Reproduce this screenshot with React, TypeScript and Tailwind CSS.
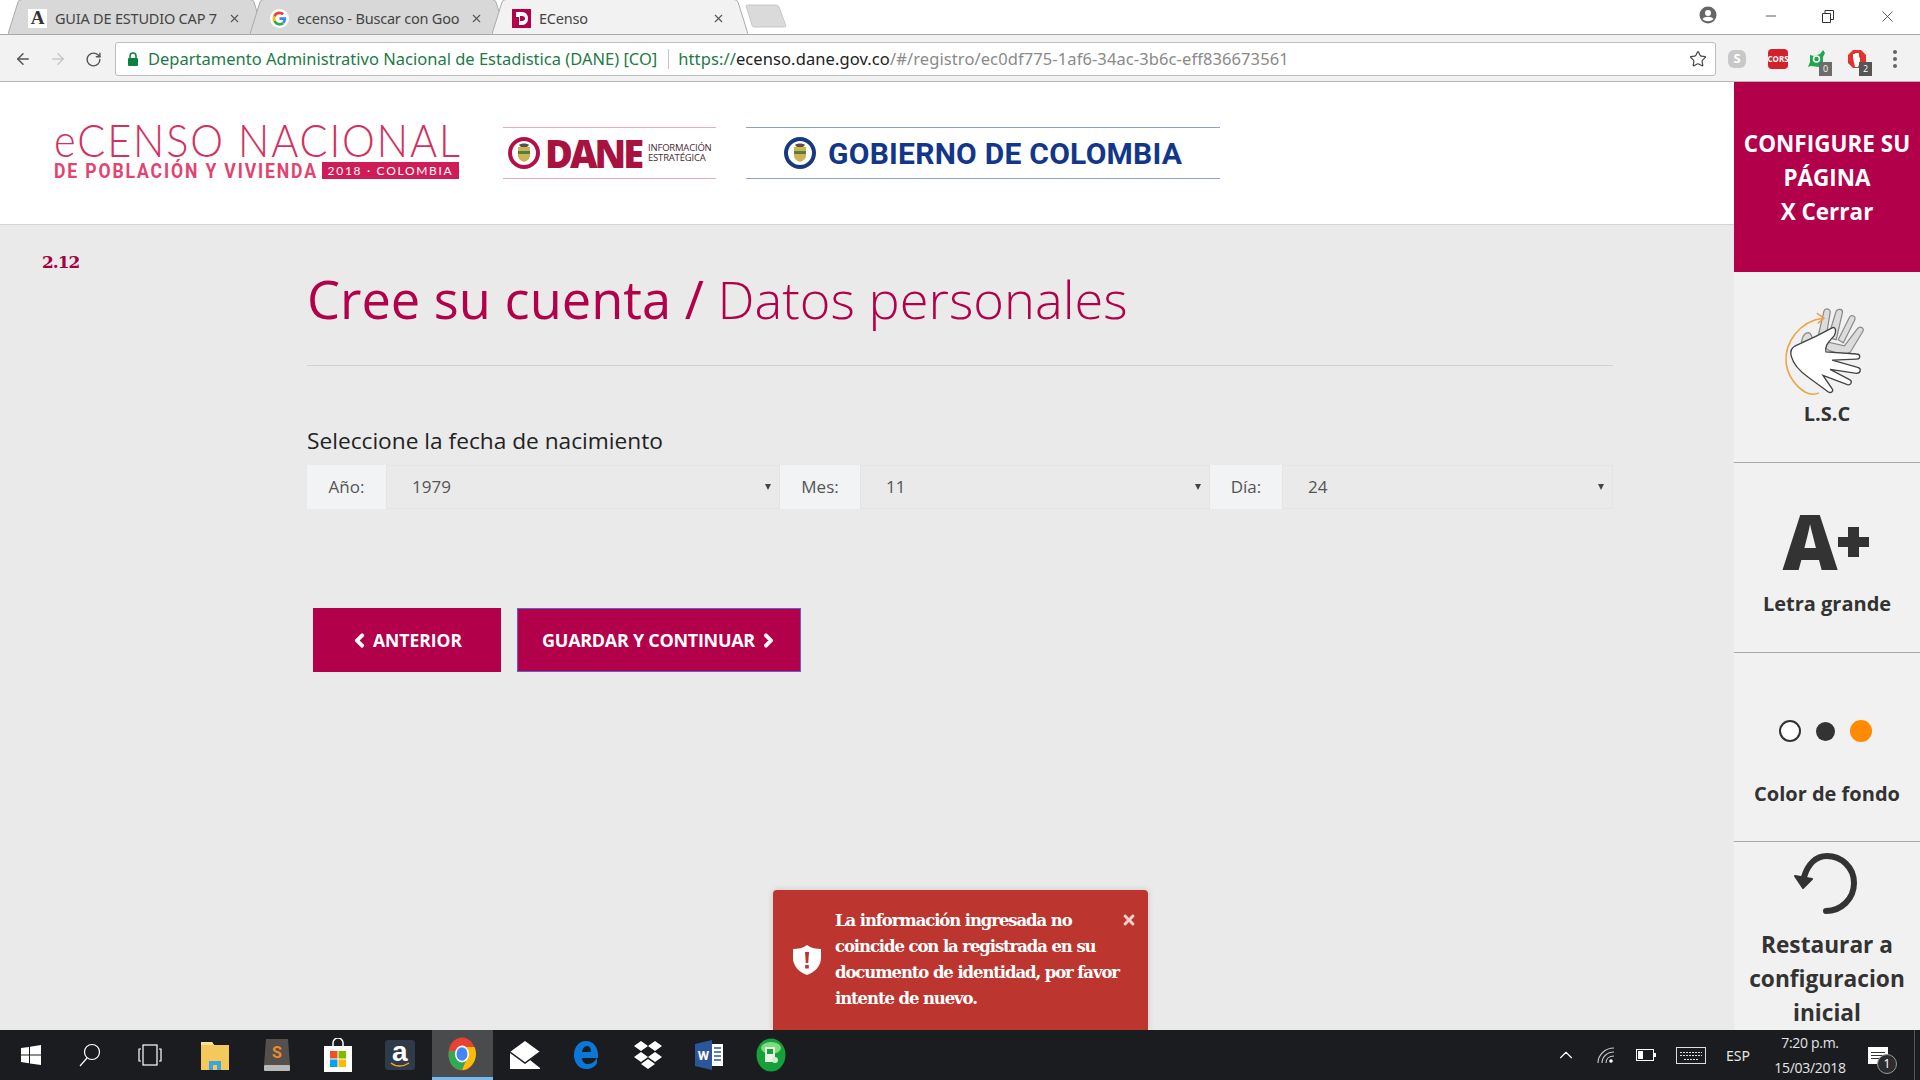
import React from "react";
import { FaChevronLeft, FaChevronRight, FaTimes } from "react-icons/fa";
import { ArrowLeft, ArrowRight, RotateCw, Star, X, Minus, ChevronUp } from "lucide-react";

const Crest = ({ size, ring }: { size: number; ring: string }) => (
  <svg width={size} height={size} viewBox="0 0 32 32" className="shrink-0">
    <circle cx="16" cy="16" r="14" fill="#fff" stroke={ring} strokeWidth="4" />
    <path d="M10 10h12v8c0 4-3 6-6 7-3-1-6-3-6-7z" fill="#c9b458" />
    <path d="M10 14h12v3H10z" fill="#5d7a3a" />
    <path d="M11 8c2-2 8-2 10 0l-2 2h-6z" fill="#55504a" />
  </svg>
);

const Tab = ({
  icon,
  title,
  active,
  first,
}: {
  icon: React.ReactNode;
  title: string;
  active?: boolean;
  first?: boolean;
}) => (
  <div className={`relative h-[35px] w-[256px] shrink-0 ${first ? "" : "-ml-[14px]"} ${active ? "z-10" : ""}`}>
    <svg className="absolute inset-0" width="256" height="35" viewBox="0 0 256 35">
      <path
        d="M0 35 L10 3 Q11 .5 14 .5 H242 Q245 .5 246 3 L256 35"
        fill={active ? "#f2f2f2" : "#d8d8d8"}
        stroke="#a9a9a9"
      />
    </svg>
    <div className="relative flex h-full items-center pl-[20px] pr-[23px] pt-[4px]">
      <div className="w-[19px] h-[19px] shrink-0">{icon}</div>
      <span className="ml-[8px] w-[163px] overflow-hidden whitespace-nowrap text-[14.5px] text-[#444] font-['Noto_Sans',sans-serif] tracking-[-0.2px]">
        {title}
      </span>
      <X size={13} strokeWidth={2} className="ml-auto text-[#555]" />
    </div>
  </div>
);

const SideItem = ({ h, label, icon }: { h: string; label: React.ReactNode; icon: React.ReactNode }) => (
  <div className={`${h} shrink-0 border-b border-[#a8a8a8] flex flex-col items-center`}>{icon}{label}</div>
);

const HandIcon = () => (
  <svg width="88" height="94" viewBox="0 0 86 92" className="mt-[35px]">
    <g fill="#dcdcdc" stroke="#8a8a8a" strokeWidth="1.2">
      <path d="M18 34c1-6 4-9 7-9 3 1 4 5 5 10z" />
      <path d="M34 30l6-26c1-3 7-3 6 2l-4 24z" />
      <path d="M44 30l8-26c2-3 7-2 6 2l-6 26z" />
      <path d="M54 32l11-22c2-3 7-1 5 3l-11 22z" />
      <path d="M60 38l13-17c3-3 7 0 5 3L66 44c-4 3-12 2-20-1-5-2-7-6-4-9z" />
    </g>
    <path
      d="M35 84C22 90 5 72 3 55 1 35 16 14 39 11"
      fill="none"
      stroke="#f0a040"
      strokeWidth="1.5"
    />
    <path d="M33 6l7 5-6 5" fill="none" stroke="#f0a040" strokeWidth="1.5" />
    <path
      d="M49 20C40 25 26 32 12 38c-4 2-5 6-4 10 2 8 10 16 17 21l19 14c3 2 6-1 4-3l-9-13 24 9c4 1 5-4 2-5L46 61l26 4c4 0 5-5 1-6L48 52l24-1c4 0 4-5 0-5L42 44c-2-6 4-11 8-16 2-3 2-8-1-8z"
      fill="#fff"
      stroke="#444"
      strokeWidth="1.3"
    />
  </svg>
);

const TaskSlot = ({ children, active, className = "" }: { children: React.ReactNode; active?: boolean; className?: string }) => (
  <div
    className={`h-full w-[61.5px] shrink-0 flex items-center justify-center ${className} ${
      active ? "bg-[#4a4b4d] border-b-[3px] border-[#76b9ed]" : ""
    }`}
  >
    {children}
  </div>
);

const InputLabel = ({ w, children }: { w: string; children: React.ReactNode }) => (
  <div className={`${w} shrink-0 bg-[#f1f3f4] flex items-center justify-center text-[17px] text-[#555]`}>{children}</div>
);

const SelectBox = ({ w, value }: { w: string; value: string }) => (
  <div className={`${w} shrink-0 border border-[#e4e4e4] flex items-center justify-between pl-[25px] pr-[8px] text-[17px] text-[#555]`}>
    <span>{value}</span>
    <span className="w-0 h-0 border-x-[3.5px] border-x-transparent border-t-[6px] border-t-[#444]" />
  </div>
);

export default function App() {
  return (
    <div className="h-screen w-full overflow-hidden flex flex-col relative bg-[#eaeaea] font-['Open_Sans',sans-serif]">
      {/* Tab strip */}
      <div className="h-[35px] shrink-0 bg-white border-b border-[#a9a9a9] flex items-end pl-[8px] relative">
        <Tab
          first
          title="GUIA DE ESTUDIO CAP 7"
          icon={
            <div className="w-full h-full bg-white flex items-center justify-center font-['Liberation_Serif',serif] font-bold text-[19px] text-[#333]">
              A
            </div>
          }
        />
        <Tab
          title="ecenso - Buscar con Goo"
          icon={
            <svg viewBox="0 0 48 48" className="w-full h-full">
              <circle cx="24" cy="24" r="24" fill="#fff" />
              <path d="M41 24.5c0-1.3-.1-2.300-.3-3.500H24v6.500h9.600c-.4 2.200-1.700 4-3.500 5.300l5.400 4.200C38.800 33.900 41 29.600 41 24.500z" fill="#4285f4" />
              <path d="M24 42c4.600 0 8.400-1.500 11.500-4.100l-5.400-4.200c-1.500 1-3.500 1.700-6.100 1.700-4.600 0-8.600-3.100-10-7.300l-5.600 4.300C11.300 38.100 17.200 42 24 42z" fill="#34a853" />
              <path d="M14 28.100c-.8-2.400-.8-5.200 0-7.900l-5.600-4.300c-2.500 5-2.500 11.200 0 16.500z" fill="#fbbc05" />
              <path d="M24 13c2.600 0 4.900.9 6.800 2.600l4.800-4.800C32.400 7.900 28.600 6 24 6 17.200 6 11.300 9.900 8.400 15.900l5.600 4.300c1.400-4.200 5.400-7.200 10-7.200z" fill="#ea4335" />
            </svg>
          }
        />
        <Tab
          active
          title="ECenso"
          icon={
            <svg viewBox="0 0 19 19" className="w-full h-full">
              <rect width="19" height="19" fill="#b3004a" />
              <path d="M4 3h6c4 0 6 3 6 6.500S14 16 10 16H4z" fill="#fff" />
              <path d="M8 7h2c2 0 3 1 3 2.500S12 12 10 12H8z" fill="#b3004a" />
              <path d="M4 8h3v8H4z" fill="#b3004a" />
            </svg>
          }
        />
        <svg width="42" height="24" viewBox="0 0 42 24" className="-ml-[3px] mb-[6px] shrink-0">
          <path d="M1 2 Q1 1 3 1 H31 Q33 1 34 3 L41 22 Q41 23 39 23 H9 Q7 23 7 21z" fill="#dadada" stroke="#c8c8c8" />
        </svg>
        <div className="ml-auto self-start flex items-center h-[32px] text-[#333]">
          <svg width="20" height="20" viewBox="0 0 20 20" className="mr-[45px] mb-[2px]">
            <circle cx="10" cy="10" r="8.500" fill="#666" />
            <circle cx="10" cy="8" r="3" fill="#fff" />
            <path d="M4.500 14c2-3 9-3 11 0-3 3-8 3-11 0z" fill="#fff" />
          </svg>
          <Minus size={16} strokeWidth={1.2} className="mr-[43px]" />
          <svg width="12" height="13" viewBox="0 0 12 13" className="mr-[44px]" fill="none" stroke="#333">
            <path d="M.5 3.500h8v9h-8zM3 3.500v-3h8.500v9h-3" />
          </svg>
          <X size={19} strokeWidth={1} className="mr-[23px]" />
        </div>
      </div>

      {/* Toolbar */}
      <div className="h-[47px] shrink-0 bg-[#f2f2f2] border-b border-[#b5b5b5] flex items-center pl-[14px] pt-[2px]">
        <ArrowLeft size={18} strokeWidth={2} className="text-[#555]" />
        <ArrowRight size={18} strokeWidth={2} className="ml-[17px] text-[#c8c8c8]" />
        <RotateCw size={17} strokeWidth={2} className="ml-[18px] text-[#555]" />
        <div className="ml-[13px] w-[1601px] h-[34px] bg-white border border-[#bdbdbd] rounded-[3px] flex items-center pl-[11px] pr-[8px] font-['Noto_Sans',sans-serif] text-[16.5px]">
          <svg width="12" height="15" viewBox="0 0 12 15" className="shrink-0">
            <path d="M3 6V4a3 3 0 016 0v2" fill="none" stroke="#0b8043" strokeWidth="1.500" />
            <rect x="1" y="6" width="10" height="8" rx="1" fill="#0b8043" />
          </svg>
          <span className="ml-[9px] text-[#1e7a46] whitespace-nowrap">
            Departamento Administrativo Nacional de Estadistica (DANE) [CO]
          </span>
          <span className="w-px h-[20px] bg-[#c4c4c4] ml-[11px] shrink-0" />
          <span className="ml-[9px] whitespace-nowrap text-[#8a8a8a] tracking-[0.1px]">
            <span className="text-[#1e7a46]">https://</span>
            <span className="text-[#222]">ecenso.dane.gov.co</span>/#/registro/ec0df775-1af6-34ac-3b6c-eff836673561
          </span>
          <Star size={18} strokeWidth={1.6} className="ml-auto text-[#444]" />
        </div>
        {/* extensions */}
        <div className="flex items-center ml-[12px]">
          <div className="w-[18px] h-[18px] rounded-[6px] bg-[#c8c8c8] flex items-center justify-center text-white text-[13px] font-bold">S</div>
          <div className="ml-[22px] w-[20px] h-[20px] rounded-[4px] bg-[#d3202a] flex items-center justify-center text-white text-[8px] font-bold">CORS</div>
          <div className="ml-[19px] relative w-[20px] h-[20px]">
            <svg viewBox="0 0 20 20" className="w-full h-full">
              <path d="M3 6l4 1 6-2 3-4 2 3-2 4v6l-4 4-8-1-3 1 2-5z" fill="#1ca84e" />
              <circle cx="9.500" cy="10" r="3" fill="none" stroke="#fff" strokeWidth="1.500" />
            </svg>
            <span className="absolute -right-[5px] -bottom-[7px] w-[13px] h-[14px] bg-[#6c6c6c] text-white text-[9px] flex items-center justify-center">0</span>
          </div>
          <div className="ml-[20px] relative w-[20px] h-[20px]">
            <svg viewBox="0 0 20 20" className="w-full h-full">
              <path d="M6 1h8l5 5v8l-5 5H6l-5-5V6z" fill="#e5322e" />
              <path d="M6 9V5h2v3-4h2v4-4h2v5l1-1v5l-2 5H8z" fill="#fff" />
            </svg>
            <span className="absolute -right-[5px] -bottom-[7px] w-[13px] h-[14px] bg-[#555] text-white text-[9px] flex items-center justify-center">2</span>
          </div>
          <div className="ml-[26px] flex flex-col gap-[3px]">
            <span className="w-[4px] h-[4px] rounded-full bg-[#666]" />
            <span className="w-[4px] h-[4px] rounded-full bg-[#666]" />
            <span className="w-[4px] h-[4px] rounded-full bg-[#666]" />
          </div>
        </div>
      </div>

      {/* Page */}
      <div className="flex-1 min-h-0 flex">
        <div className="flex-1 min-w-0 flex flex-col">
          {/* Header */}
          <div className="h-[143px] shrink-0 bg-white border-b border-[#d4d4d4] flex items-center pl-[54px]">
            <div className="w-[405px] shrink-0 -mt-[8px]">
              <div className="text-[46px] leading-[43px] font-light text-[#d3305e] tracking-[2.1px] whitespace-nowrap font-['Lato',sans-serif] scale-x-[0.9] origin-left">
                eCENSO NACIONAL
              </div>
              <div className="flex items-center h-[20px]">
                <span className="text-[20px] font-bold text-[#e2436f] tracking-[2.1px] whitespace-nowrap font-['Roboto',sans-serif] scale-x-[0.88] origin-left w-[268px]">
                  DE POBLACIÓN Y VIVIENDA
                </span>
                <span className="w-[137px] h-[17px] bg-[#cf1c56] text-white text-[12px] tracking-[1.7px] flex items-center justify-center whitespace-nowrap font-['Lato',sans-serif]">
                  2018 · COLOMBIA
                </span>
              </div>
            </div>
            <div className="ml-[44px] w-[213px] h-[52px] shrink-0 border-y border-[#f2a6c0] flex items-center pl-[5px]">
              <Crest size={32} ring="#b3104a" />
              <span className="ml-[5px] text-[38px] leading-none font-extrabold text-[#a8123f] tracking-[-3px] font-['Open_Sans',sans-serif]">DANE</span>
              <div className="ml-[7px] text-[9.5px] leading-[10px] text-[#4a2a33] tracking-[-0.2px]">
                <div>INFORMACIÓN</div>
                <div>ESTRATÉGICA</div>
              </div>
            </div>
            <div className="ml-[30px] w-[474px] h-[52px] shrink-0 border-y border-[#8da2c8] flex items-center pl-[38px]">
              <Crest size={32} ring="#17397f" />
              <span className="ml-[12px] pt-[1px] text-[30px] font-bold text-[#12378a] tracking-[0.25px] whitespace-nowrap font-['Roboto',sans-serif]">
                GOBIERNO DE COLOMBIA
              </span>
            </div>
          </div>

          {/* Content */}
          <div className="flex-1 min-h-0 relative">
            <div className="pt-[25px] pl-[42px] text-[17px] leading-[24px] font-bold text-[#a5003f] font-['DejaVu_Serif',serif] tracking-[-1px]">
              2.12
            </div>
            <div className="ml-[307px] w-[1306px] mt-[-12px]">
              <h1 className="text-[52.400px] leading-[74px] text-[#b3004a] pb-[29px] border-b border-[#d2d2d2] whitespace-nowrap">
                Cree su cuenta / <span className="font-light">Datos personales</span>
              </h1>
              <div className="mt-[60px] text-[22.700px] leading-[30px] text-[#222]">Seleccione la fecha de nacimiento</div>
              <div className="mt-[9px] flex h-[44px]">
                <InputLabel w="w-[79px]">Año:</InputLabel>
                <SelectBox w="w-[394px]" value="1979" />
                <InputLabel w="w-[80px]">Mes:</InputLabel>
                <SelectBox w="w-[350px]" value="11" />
                <InputLabel w="w-[72px]">Día:</InputLabel>
                <SelectBox w="w-[331px]" value="24" />
              </div>
              <div className="mt-[99px] ml-[6px] flex gap-[16px]">
                <div className="w-[188px] h-[64px] bg-[#b3004a] text-white text-[17.500px] font-bold flex items-center justify-center gap-[6px]">
                  <FaChevronLeft size={15} stroke="currentColor" strokeWidth={50} /> ANTERIOR
                </div>
                <div className="w-[284px] h-[64px] bg-[#b3004a] border border-[#5d62d8] text-white text-[18px] font-bold flex items-center justify-center gap-[6px] tracking-[-0.3px]">
                  GUARDAR Y CONTINUAR <FaChevronRight size={15} stroke="currentColor" strokeWidth={50} />
                </div>
              </div>
            </div>
          </div>
        </div>

        {/* Sidebar */}
        <div className="w-[186px] shrink-0 bg-[#f1f1f1] flex flex-col overflow-hidden text-[#333] font-bold text-center">
          <div className="h-[190px] shrink-0 bg-[#b3004a] text-white text-[22.500px] leading-[34px] pt-[45px]">
            CONFIGURE SU
            <br />
            PÁGINA
            <br />X Cerrar
          </div>
          <SideItem h="h-[191px]" icon={<HandIcon />} label={<div className="text-[20px] leading-[24px] mt-[1px]">L.S.C</div>} />
          <SideItem
            h="h-[190px]"
            icon={
              <div className="mt-[38px] mr-[3px] h-[80px] flex items-center">
                <span className="text-[76px] leading-[80px] font-extrabold">A</span>
                <svg width="31" height="30" viewBox="0 0 31 30" fill="#333" className="mt-[2px]">
                  <path d="M10 0h11v10h10v10H21v10H10V20H0V10h10z" />
                </svg>
              </div>
            }
            label={<div className="text-[20px] leading-[26px] mt-[10px]">Letra grande</div>}
          />
          <SideItem
            h="h-[189px]"
            icon={
              <div className="mt-[67px] mr-[3px] flex items-center gap-[15px]">
                <span className="w-[22px] h-[22px] rounded-full border-2 border-[#333] bg-white" />
                <span className="w-[19px] h-[19px] rounded-full bg-[#333]" />
                <span className="w-[22px] h-[22px] rounded-full bg-[#ff8a00]" />
              </div>
            }
            label={<div className="text-[20px] leading-[26px] mt-[39px]">Color de fondo</div>}
          />
          <div className="shrink-0 flex flex-col items-center">
            <svg width="66" height="62" viewBox="0 0 66 62" className="mt-[11px]">
              <path d="M32 58c15 0 28-12 28-28S47 3 33 3C22 3 14 11 10 24" fill="none" stroke="#333" strokeWidth="6" strokeLinecap="round" />
              <path d="M1 23l17 3-9 9z" fill="#333" stroke="#333" strokeWidth="2" strokeLinejoin="round" />
            </svg>
            <div className="text-[22.700px] leading-[34px] mt-[13px]">
              Restaurar a
              <br />
              configuracion
              <br />
              inicial
            </div>
          </div>
        </div>
      </div>

      {/* Error toast */}
      <div className="absolute left-[773px] bottom-[50px] w-[375px] h-[140px] bg-[#bc352f] rounded-t-[4px] flex items-center pl-[20px] text-white shadow-[0_0_6px_rgba(0,0,0,0.15)]">
        <svg width="28" height="30" viewBox="0 0 28 30" className="shrink-0">
          <path d="M14 0c4 3 9 4 14 4v9c0 8-6 14-14 17C6 27 0 21 0 13V4c5 0 10-1 14-4z" fill="#fff" />
          <path d="M12 7h4l-.8 11h-2.400zM12.200 20h3.600v3.500h-3.600z" fill="#bc352f" />
        </svg>
        <div className="ml-[14px] w-[292px] text-[16.5px] leading-[25.800px] font-bold font-['DejaVu_Serif',serif] tracking-[-1.1px]">
          La información ingresada no coincide con la registrada en su documento de identidad, por favor intente de nuevo.
        </div>
        <FaTimes size={16} className="absolute right-[11px] top-[22px] text-[#f4d0ce]" />
      </div>

      {/* Taskbar */}
      <div className="h-[50px] shrink-0 bg-[#1a1c1f] flex items-center text-white font-['Noto_Sans',sans-serif] relative z-10">
        <TaskSlot>
          <svg width="20" height="20" viewBox="0 0 20 20" fill="#fff">
            <path d="M0 3l8-1.100V9.500H0zM9 1.700L20 0v9.500H9zM0 10.500h8v7.700L0 17zM9 10.500h11V20L9 18.400z" />
          </svg>
        </TaskSlot>
        <TaskSlot className="pr-[5px]">
          <svg width="22" height="24" viewBox="0 0 22 24" fill="none" stroke="#fff" strokeWidth="1.200">
            <circle cx="13" cy="9" r="7.500" />
            <path d="M8 15L1 23" />
          </svg>
        </TaskSlot>
        <TaskSlot className="pr-[7px]">
          <svg width="24" height="24" viewBox="0 0 24 24" fill="none" stroke="#fff" strokeWidth="1.200">
            <rect x="5" y="2" width="14" height="20" />
            <path d="M3 6H1v12h2M21 6h2v12h-2" />
          </svg>
        </TaskSlot>
        <TaskSlot className="pr-[1px]">
          <svg width="28" height="30" viewBox="0 0 28 30">
            <path d="M0 2h11l2 3h15v25H0z" fill="#f5c85c" />
            <path d="M0 2h11l2 3H0z" fill="#fbe29a" />
            <path d="M8 30v-9h12v9h-4v-5h-4v5z" fill="#3aa6dd" />
          </svg>
        </TaskSlot>
        <TaskSlot>
          <svg width="26" height="32" viewBox="0 0 26 32">
            <path d="M2 0h22l2 26H0z" fill="#55504b" />
            <rect y="26" width="26" height="6" rx="1" fill="#b9b9b9" />
            <text x="13" y="19" textAnchor="middle" fontSize="16" fontWeight="700" fill="#ee8a2c" fontFamily="Roboto, sans-serif">S</text>
          </svg>
        </TaskSlot>
        <TaskSlot>
          <svg width="28" height="34" viewBox="0 0 28 34">
            <path d="M9 9V5a5 5 0 0110 0v4" fill="none" stroke="#fff" strokeWidth="1.500" />
            <rect y="8" width="28" height="26" fill="#fff" />
            <rect x="6" y="13" width="7.500" height="7.500" fill="#f25022" />
            <rect x="14.500" y="13" width="7.500" height="7.500" fill="#7fba00" />
            <rect x="6" y="21.500" width="7.500" height="7.500" fill="#00a4ef" />
            <rect x="14.500" y="21.500" width="7.500" height="7.500" fill="#ffb900" />
          </svg>
        </TaskSlot>
        <TaskSlot>
          <div className="relative w-[30px] h-[30px] rounded-[3px] bg-[#2f3b48] flex items-center justify-center text-[28px] leading-none font-bold font-['Liberation_Sans',sans-serif] pb-[7px]">
            a
            <svg width="20" height="6" viewBox="0 0 20 6" className="absolute left-[5px] bottom-[2px]" fill="none" stroke="#f0a030" strokeWidth="1.500">
              <path d="M1 1c5 4 12 4 18 0" />
            </svg>
          </div>
        </TaskSlot>
        <TaskSlot active className="ml-[1px]">
          <svg width="28" height="34" viewBox="0 0 28 34">
            <ellipse cx="14" cy="17" rx="13.500" ry="16.500" fill="#e94235" />
            <path d="M1 14c-2 9 3 19 13 19l7-14-7-5z" fill="#34a853" />
            <path d="M14 33c8 0 14-8 14-16 0-3-.6-5-1.500-7H14l6 9z" fill="#fbbc05" />
            <ellipse cx="14" cy="17" rx="7" ry="8.500" fill="#fff" />
            <ellipse cx="14" cy="17" rx="5.500" ry="6.800" fill="#4285f4" />
          </svg>
        </TaskSlot>
        <TaskSlot className="ml-[1px]">
          <svg width="30" height="28" viewBox="0 0 30 28">
            <path d="M0 11L15 0l15 11v17H0z" fill="#fff" />
            <path d="M0 11l15 11 15-11" fill="none" stroke="#1a1c1f" strokeWidth="1.500" />
            <path d="M30 11L20 19l10 8z" fill="#1a1c1f" />
          </svg>
        </TaskSlot>
        <TaskSlot>
          <svg width="24" height="30" viewBox="0 0 24 30">
            <path d="M12 1C5 1 0 7 0 15s5 14 12 14c5 0 9-2 11-6v-5c-2 3-5 6-9 6-3 0-6-2-6-6h16v-3C24 7 19 1 12 1zm-4 11c.5-3 2-6 5-6s4 3 4 6z" fill="#0a78d6" />
          </svg>
        </TaskSlot>
        <TaskSlot>
          <svg width="30" height="28" viewBox="0 0 30 28" fill="#fff">
            <path d="M8 0l7 5-7 5-7-5zM22 0l7 5-7 5-7-5zM8 11l7 5-7 5-7-5zM22 11l7 5-7 5-7-5zM15 18l7 5-7 5-7-5z" />
          </svg>
        </TaskSlot>
        <TaskSlot>
          <svg width="28" height="30" viewBox="0 0 28 30">
            <path d="M0 4l17-4v30L0 26z" fill="#2b579a" />
            <rect x="17" y="4" width="11" height="22" fill="#fff" />
            <path d="M19 8h7M19 12h7M19 16h7M19 20h7" stroke="#2b579a" strokeWidth="1.500" />
            <text x="8.500" y="20" textAnchor="middle" fontSize="13" fontWeight="700" fill="#fff" fontFamily="Roboto, sans-serif">W</text>
          </svg>
        </TaskSlot>
        <TaskSlot>
          <svg width="30" height="34" viewBox="0 0 30 34">
            <ellipse cx="15" cy="17" rx="14.500" ry="16.500" fill="#15a03a" />
            <ellipse cx="15" cy="10" rx="10" ry="6" fill="#7fdc7c" />
            <rect x="9" y="9" width="10" height="15" fill="#e7f5e7" />
            <rect x="11" y="11" width="6" height="5" fill="#15a03a" />
            <circle cx="19" cy="22" r="3" fill="#cfeccf" />
          </svg>
        </TaskSlot>

        {/* Tray */}
        <div className="ml-auto flex items-center h-full">
          <ChevronUp size={22} strokeWidth={1.2} className="mr-[20px]" />
          <svg width="18" height="17" viewBox="0 0 18 17" fill="none" stroke="#c9c9c9" strokeWidth="1.100" className="mr-[21px]">
            <path d="M1 16C1 8 8 1 17 1M5 16c0-6 5-11 12-11M9 16c0-4 3-7 8-7" />
            <circle cx="14" cy="14" r="1.800" fill="#fff" stroke="none" />
          </svg>
          <svg width="20" height="12" viewBox="0 0 20 12" className="mr-[20px]">
            <rect x=".5" y=".5" width="17" height="11" fill="none" stroke="#fff" />
            <rect x="2" y="2" width="5" height="8" fill="#fff" />
            <rect x="18" y="4" width="2" height="4" fill="#fff" />
          </svg>
          <svg width="30" height="17" viewBox="0 0 30 17" fill="none" stroke="#ddd" className="mr-[19px]">
            <rect x=".5" y=".5" width="29" height="16" />
            <path d="M4 5.500h22M4 8.500h22M8 12.500h14" strokeDasharray="2 1" />
          </svg>
          <span className="text-[14px] w-[26px] text-center text-[#e5e5e5] mr-[20px]">ESP</span>
          <div className="w-[78px] text-center text-[14px] leading-[25px] text-[#e5e5e5] font-['Open_Sans',sans-serif] tracking-[-0.3px]">
            <div>7:20 p.m.</div>
            <div>15/03/2018</div>
          </div>
          <div className="relative w-[24px] ml-[19px] mr-[22px]">
            <div className="w-[20px] h-[17px] bg-white flex flex-col gap-[2px] justify-center px-[3px]">
              <span className="h-px bg-[#333]" />
              <span className="h-px bg-[#333]" />
              <span className="h-px bg-[#333]" />
            </div>
            <span className="absolute left-[9px] top-[7px] w-[20px] h-[20px] rounded-full bg-[#2c2d2f] border border-[#999] text-[12px] flex items-center justify-center">1</span>
          </div>
          <span className="w-px h-full bg-[#555] mr-[5px]" />
        </div>
      </div>
    </div>
  );
}
